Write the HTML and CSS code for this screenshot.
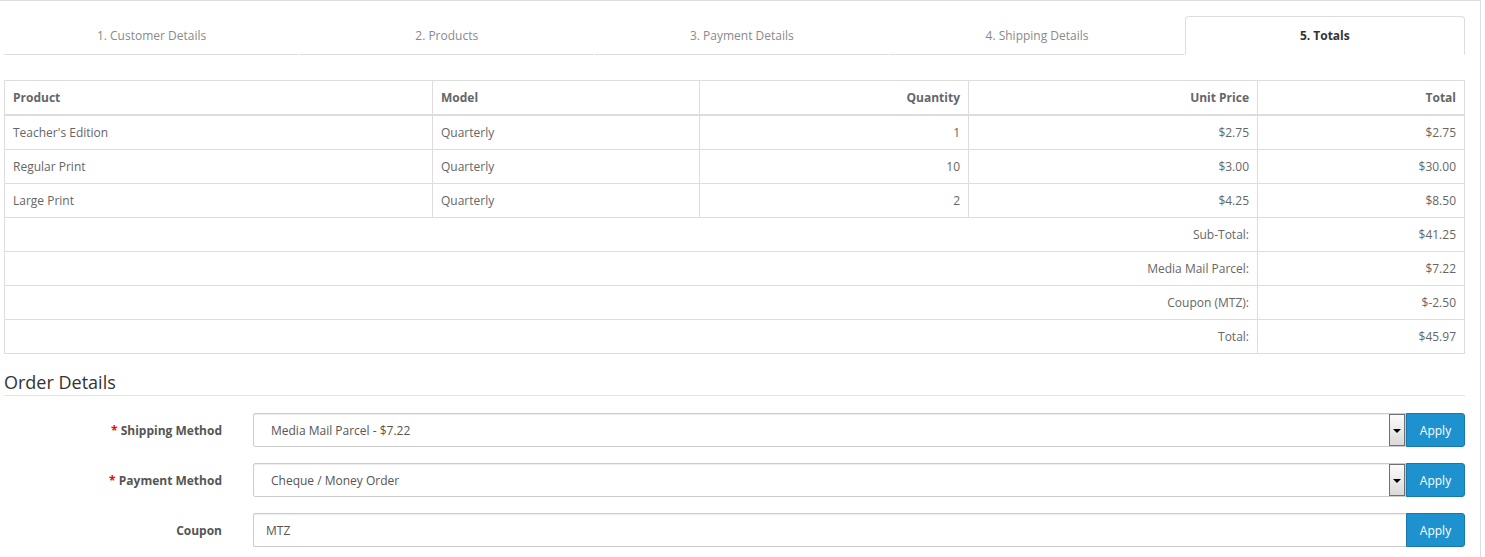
FILE: index.html
```html
<!DOCTYPE html>
<html lang="en">
<head>
    <meta charset="UTF-8">
    <meta name="viewport" content="width=device-width, initial-scale=1.0">
    <title>Order - Totals</title>
    <link rel="stylesheet" href="styles.css">
</head>
<body>
    <div class="panel">
        <!-- Steps -->
        <ul class="nav-tabs">
            <li><a href="#">1. Customer Details</a></li>
            <li><a href="#">2. Products</a></li>
            <li><a href="#">3. Payment Details</a></li>
            <li><a href="#">4. Shipping Details</a></li>
            <li class="active"><a href="#">5. Totals</a></li>
        </ul>

        <!-- Cart -->
        <table class="table">
            <thead>
                <tr>
                    <th class="col-product">Product</th>
                    <th class="col-model">Model</th>
                    <th class="col-qty text-right">Quantity</th>
                    <th class="col-price text-right">Unit Price</th>
                    <th class="col-total text-right">Total</th>
                </tr>
            </thead>
            <tbody>
                <tr>
                    <td>Teacher's Edition</td>
                    <td>Quarterly</td>
                    <td class="text-right">1</td>
                    <td class="text-right">$2.75</td>
                    <td class="text-right">$2.75</td>
                </tr>
                <tr>
                    <td>Regular Print</td>
                    <td>Quarterly</td>
                    <td class="text-right">10</td>
                    <td class="text-right">$3.00</td>
                    <td class="text-right">$30.00</td>
                </tr>
                <tr>
                    <td>Large Print</td>
                    <td>Quarterly</td>
                    <td class="text-right">2</td>
                    <td class="text-right">$4.25</td>
                    <td class="text-right">$8.50</td>
                </tr>
            </tbody>
            <tfoot>
                <tr>
                    <td colspan="4" class="text-right">Sub-Total:</td>
                    <td class="text-right">$41.25</td>
                </tr>
                <tr>
                    <td colspan="4" class="text-right">Media Mail Parcel:</td>
                    <td class="text-right">$7.22</td>
                </tr>
                <tr>
                    <td colspan="4" class="text-right">Coupon (MTZ):</td>
                    <td class="text-right">$-2.50</td>
                </tr>
                <tr>
                    <td colspan="4" class="text-right">Total:</td>
                    <td class="text-right">$45.97</td>
                </tr>
            </tfoot>
        </table>

        <!-- Order Details -->
        <fieldset class="order-details">
            <legend>Order Details</legend>

            <div class="form-group">
                <label class="control-label"><span class="required">*</span> Shipping Method</label>
                <div class="input-group">
                    <div class="select-wrap">
                        <select class="form-control">
                            <option>Media Mail Parcel - $7.22</option>
                        </select>
                        <span class="select-arrow"></span>
                    </div>
                    <button type="button" class="btn-apply">Apply</button>
                </div>
            </div>

            <div class="form-group">
                <label class="control-label"><span class="required">*</span> Payment Method</label>
                <div class="input-group">
                    <div class="select-wrap">
                        <select class="form-control">
                            <option>Cheque / Money Order</option>
                        </select>
                        <span class="select-arrow"></span>
                    </div>
                    <button type="button" class="btn-apply">Apply</button>
                </div>
            </div>

            <div class="form-group">
                <label class="control-label">Coupon</label>
                <div class="input-group">
                    <input type="text" class="form-control" value="MTZ">
                    <button type="button" class="btn-apply">Apply</button>
                </div>
            </div>
        </fieldset>
    </div>
</body>
</html>
```

FILE: styles.css
```css
* {
    margin: 0;
    padding: 0;
    box-sizing: border-box;
}

body {
    font-family: 'Open Sans', sans-serif;
    font-size: 12px;
    line-height: 17px;
    color: #666;
    background: #fff;
    overflow: hidden;
}

.panel {
    width: 1481px;
    border: 1px solid #ddd;
    border-left: none;
    padding: 15px 15px 0 4px;
}

/* Tabs */
.nav-tabs {
    list-style: none;
    display: flex;
    margin-bottom: 25px;
}

.nav-tabs li {
    flex: 1 1 0;
}

.nav-tabs li.active {
    flex-grow: 0.95;
}

.nav-tabs a {
    display: block;
    padding: 10px 15px;
    text-align: center;
    text-decoration: none;
    color: #8a8a8a;
    border: 1px solid transparent;
    border-bottom-color: #ddd;
    border-radius: 4px 4px 0 0;
}

.nav-tabs li.active a {
    color: #333;
    font-weight: 700;
    border-color: #ddd;
    border-bottom-color: transparent;
}

/* Table */
.table {
    width: 100%;
    border-collapse: collapse;
    border: 1px solid #ddd;
    margin-bottom: 16px;
}

.table th,
.table td {
    padding: 8px;
    border: 1px solid #ddd;
    text-align: left;
    vertical-align: top;
}

.table th {
    font-weight: 700;
    border-bottom-width: 2px;
}

.table .text-right {
    text-align: right;
}

.col-product { width: 428px; }
.col-model { width: 267px; }
.col-qty { width: 269px; }
.col-price { width: 289px; }

/* Order details form */
.order-details {
    border: none;
}

.order-details legend {
    display: block;
    width: 100%;
    font-size: 18px;
    line-height: 24px;
    color: #333;
    padding-bottom: 1px;
    border-bottom: 1px solid #e5e5e5;
    margin-bottom: 17px;
}

.form-group {
    display: flex;
    align-items: center;
    margin-bottom: 16px;
}

.control-label {
    width: 218px;
    text-align: right;
    font-weight: 700;
    color: #555;
    margin-right: 31px;
}

.required {
    color: #f00;
}

.input-group {
    flex: 1;
    display: flex;
    height: 34px;
}

.select-wrap {
    position: relative;
    flex: 1;
    display: flex;
}

.form-control {
    flex: 1;
    width: 100%;
    height: 34px;
    padding: 6px 12px;
    font-family: 'Open Sans', sans-serif;
    font-size: 12px;
    color: #555;
    background: #fff;
    border: 1px solid #ccc;
    border-right: none;
    border-radius: 2px 0 0 2px;
    box-shadow: inset 0 1px 1px rgba(0, 0, 0, 0.075);
    outline: none;
}

select.form-control {
    appearance: none;
    -webkit-appearance: none;
    padding-left: 17px;
    border-right: 1px solid #ccc;
}

.select-arrow {
    position: absolute;
    top: 1px;
    right: 1px;
    width: 16px;
    height: 32px;
    border: 1px solid #707070;
    background: linear-gradient(#fbfbfb, #dadada);
    pointer-events: none;
}

.select-arrow::after {
    content: '';
    position: absolute;
    top: 14px;
    left: 3px;
    border-left: 4px solid transparent;
    border-right: 4px solid transparent;
    border-top: 4px solid #000;
}

.btn-apply {
    width: 59px;
    height: 34px;
    padding: 6px 12px;
    font-family: 'Open Sans', sans-serif;
    font-size: 12px;
    color: #fff;
    background: #1e91cf;
    border: 1px solid #1978ab;
    border-radius: 0 3px 3px 0;
    cursor: pointer;
}
```
